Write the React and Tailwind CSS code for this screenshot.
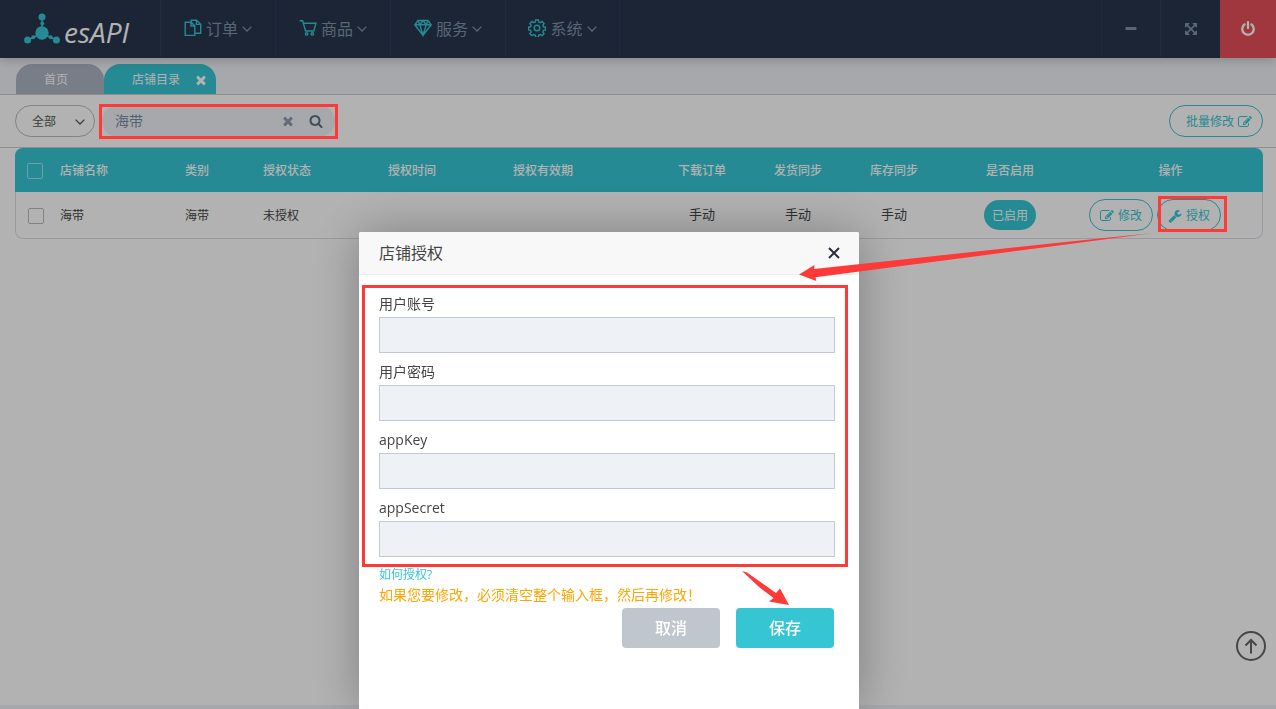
import { useState } from 'react';

const TIMES =
  'M1490 1322q0 40-28 68l-136 136q-28 28-68 28t-68-28l-294-294-294 294q-28 28-68 28t-68-28l-136-136q-28-28-28-68t28-68l294-294-294-294q-28-28-28-68t28-68l136-136q28-28 68-28t68 28l294 294 294-294q28-28 68-28t68 28l136 136q28 28 28 68t-28 68l-294 294 294 294q28 28 28 68z';
const POWER =
  'M1664 896q0 156-61 298t-164 245-245 164-298 61-298-61-245-164-164-245-61-298q0-182 80.5-343t226.5-270q43-32 95.5-25t83.5 50q32 42 24.5 94.5t-49.5 84.5q-98 74-151.5 181t-53.5 228q0 104 40.5 198.5t109.5 163.5 163.5 109.5 198.5 40.5 198.5-40.5 163.5-109.5 109.5-163.5 40.5-198.5q0-121-53.5-228t-151.5-181q-42-32-49.5-84.5t24.5-94.5q31-43 84-50t95 25q146 109 226.5 270t80.5 343zm-640-768v640q0 52-38 90t-90 38-90-38-38-90v-640q0-52 38-90t90-38 90 38 38 90z';
const SEARCH =
  'M1216 832q0-185-131.5-316.5t-316.5-131.5-316.5 131.5-131.5 316.5 131.5 316.5 316.5 131.5 316.5-131.5 131.5-316.5zm512 832q0 52-38 90t-90 38q-54 0-90-38l-343-342q-179 124-399 124-143 0-273.5-55.5t-225-150-150-225-55.5-273.5 55.5-273.5 150-225 225-150 273.5-55.5 273.5 55.5 225 150 150 225 55.5 273.5q0 220-124 399l343 343q37 37 37 90z';
const WRENCH =
  'M448 1472q0-26-19-45t-45-19-45 19-19 45 19 45 45 19 45-19 19-45zm644-420l-682 682q-37 37-90 37-52 0-91-37l-106-108q-38-36-38-90 0-53 38-91l681-681q39 98 114.5 173.5t173.5 114.5zm634-435q0 39-23 106-47 134-164.5 217.5t-258.5 83.5q-185 0-316.5-131.5t-131.5-316.5 131.5-316.5 316.5-131.5q58 0 121.5 16.5t107.5 46.5q16 11 16 28t-16 28l-293 169v224l193 107q5-3 79-48.5t135.5-81 70.5-35.5q15 0 23.5 10t8.5 25z';
const EDIT =
  'M888 1184l116-116-152-152-116 116v56h96v96h56zm440-720q-16-16-33 1l-350 350q-17 17-1 33t33-1l350-350q17-17 1-33zm80 594v190q0 119-84.5 203.5t-203.5 84.5h-832q-119 0-203.5-84.5t-84.5-203.5v-832q0-119 84.5-203.5t203.5-84.5h832q63 0 117 25 15 7 18 23 3 17-9 29l-49 49q-14 14-32 8-23-6-45-6h-832q-66 0-113 47t-47 113v832q0 66 47 113t113 47h832q66 0 113-47t47-113v-126q0-13 9-22l64-64q15-15 35-7t20 29zm-96-738l288 288-672 672h-288v-288zm444 132l-92 92-288-288 92-92q28-28 68-28t68 28l152 152q28 28 28 68t-28 68z';
const MINUS =
  'M1600 736v192q0 40-28 68t-68 28h-1216q-40 0-68-28t-28-68v-192q0-40 28-68t68-28h1216q40 0 68 28t28 68z';
const EXPAND =
  'M1411 541l-355 355 355 355 144-144q29-31 70-14 39 17 39 59v448q0 26-19 45t-45 19h-448q-42 0-59-40-17-39 14-69l144-144-355-355-355 355 144 144q31 30 14 69-17 40-59 40h-448q-26 0-45-19t-19-45v-448q0-42 40-59 39-17 69 14l144 144 355-355-355-355-144 144q-19 19-45 19-12 0-24-5-40-17-40-59v-448q0-26 19-45t45-19h448q42 0 59 40 17 39-14 69l-144 144 355 355 355-355-144-144q-31-30-14-69 17-40 59-40h448q26 0 45 19t19 45v448q0 42-39 59-13 5-25 5-26 0-45-19z';

function Icon({ d, className = 'h-3.5 w-3.5' }) {
  return (
    <svg viewBox="0 0 1792 1792" fill="currentColor" className={className} aria-hidden="true">
      <path d={d} />
    </svg>
  );
}

function Chevron({ className }) {
  return (
    <svg viewBox="0 0 10 6" fill="none" stroke="currentColor" strokeWidth="1.3" className={className} aria-hidden="true">
      <path d="M.6.6 5 5 9.4.6" />
    </svg>
  );
}

function NavIcon({ children }) {
  return (
    <svg
      viewBox="0 0 18 18"
      fill="none"
      stroke="currentColor"
      strokeWidth="1.4"
      className="mb-0.5 h-[18px] w-[18px] text-[#36c6d3]"
      aria-hidden="true"
    >
      {children}
    </svg>
  );
}

const menus = [
  {
    name: '订单',
    icon: (
      <NavIcon>
        <path d="M1.200 3.300h6l3.600 3.600v9.500H1.200zM7 3.500V7h3.600" />
        <path d="M7.200 3.200v-2h5.300l4.200 4v9h-5.800M12.400 1.400v4h4" />
      </NavIcon>
    ),
  },
  {
    name: '商品',
    icon: (
      <NavIcon>
        <path d="M.6 1.700h3l3 10.300h8.200L17 4.300H4.600" />
        <circle cx="7.6" cy="14.900" r="1.2" />
        <circle cx="13.4" cy="14.900" r="1.2" />
      </NavIcon>
    ),
  },
  {
    name: '服务',
    icon: (
      <NavIcon>
        <path d="M4 1.5h10l3.2 4.3L9 16.3.8 5.8zM.8 5.8h16.4M4 1.5l1.8 4.3L9 16.3l3.2-10.5L14 1.5M5.8 5.8 9 1.5l3.2 4.3" />
      </NavIcon>
    ),
  },
  {
    name: '系统',
    icon: (
      <NavIcon>
        <circle cx="9" cy="9" r="2.8" />
        <path d="M7.600 1h2.8l.4 2.1 1.5.6 1.8-1.2 2 2-1.2 1.8.6 1.500 2 .4v2.800l-2 .4-.6 1.5 1.2 1.8-2 2-1.8-1.2-1.5.6-.4 2H7.600l-.4-2-1.5-.6-1.8 1.2-2-2 1.2-1.8-.6-1.5-2-.4V8.200l2-.4.6-1.5-1.2-1.8 2-2 1.8 1.2 1.500-.6z" />
      </NavIcon>
    ),
  },
];

const fields = [
  { id: 'account', label: '用户账号' },
  { id: 'password', label: '用户密码' },
  { id: 'appKey', label: 'appKey' },
  { id: 'appSecret', label: 'appSecret' },
];

const checkbox = 'block h-4 w-4 appearance-none rounded-xs border bg-transparent';
const pill = 'flex h-8 items-center gap-1 rounded-full border border-[#36c6d3] pt-0.5 text-xs text-[#36c6d3]';

function Logo() {
  return (
    <a href="#" className="flex w-[160px] items-center pl-6">
      <svg viewBox="0 0 36 32" fill="#36c6d3" className="h-8 w-9" aria-hidden="true">
        <path d="M18 5v14M4 27l14-7 14 7" fill="none" stroke="#36c6d3" strokeWidth="1.400" />
        <circle cx="18" cy="20" r="6.700" />
        <circle cx="18" cy="4" r="3.500" />
        <circle cx="18.300" cy="10.500" r="1.900" />
        <circle cx="3.600" cy="27" r="3.500" />
        <circle cx="9.300" cy="24.300" r="2" />
        <circle cx="32.400" cy="27" r="3.500" />
        <circle cx="26.700" cy="24.300" r="2" />
      </svg>
      <span className="pt-1.5 pl-1 text-[28px] leading-8 text-white italic">esAPI</span>
    </a>
  );
}

function Header() {
  return (
    <header className="relative z-10 flex h-[58px] bg-[#28354d] text-[#7f92a8] shadow-[0_1px_10px_rgba(50,50,50,0.3)]">
      <Logo />
      <nav className="flex">
        {menus.map((menu) => (
          <a
            key={menu.name}
            href="#"
            className="flex w-[115px] items-center justify-center gap-1 border-l border-[#2d3e56] text-base last:border-r"
          >
            {menu.icon}
            <span>{menu.name}</span>
            <Chevron className="h-1.5 w-2.5" />
          </a>
        ))}
      </nav>
      <div className="ml-auto flex">
        <button aria-label="最小化" className="flex w-[59px] items-center justify-center border-l border-[#2d3e56]">
          <Icon d={MINUS} />
        </button>
        <button aria-label="全屏" className="flex w-[60px] items-center justify-center border-l border-[#2d3e56]">
          <Icon d={EXPAND} />
        </button>
        <button aria-label="退出" className="flex w-14 items-center justify-center bg-[#e7505a] text-white">
          <Icon d={POWER} className="h-4 w-4" />
        </button>
      </div>
    </header>
  );
}

function Toolbar() {
  const [keyword, setKeyword] = useState('海带');

  return (
    <div className="flex h-[53px] items-center justify-between border-b border-[#ccc] pr-[13px] pl-[15px]">
      <div className="flex items-center gap-1">
        <div className="relative">
          <select
            aria-label="类别"
            className="block h-8 w-20 appearance-none rounded-full border border-[#bbb] pt-0.5 pl-4 text-xs text-[#555]"
          >
            <option>全部</option>
          </select>
          <Chevron className="pointer-events-none absolute top-3.5 right-2.5 h-1.5 w-2.5 text-[#555]" />
        </div>
        <div className="relative px-[3px] pt-px pb-0.5 text-[#7c8ca5]">
          <div className="flex h-8 w-[233px] items-center rounded-full bg-[#eef1f5] pr-3 pl-[13px]">
            <input
              aria-label="店铺名称"
              value={keyword}
              onChange={(e) => setKeyword(e.target.value)}
              className="min-w-0 flex-1 bg-transparent text-sm outline-none"
            />
            <button aria-label="清空" onClick={() => setKeyword('')} className="mr-3.5 text-[#8e9bae]">
              <Icon d={TIMES} />
            </button>
            <button aria-label="搜索" className="text-[#5c6f88]">
              <Icon d={SEARCH} />
            </button>
          </div>
          <div className="pointer-events-none absolute inset-0 z-50 border-3 border-[#fd3a38]" />
        </div>
      </div>
      <button className={`${pill} pr-2.5 pl-4`}>
        批量修改
        <Icon d={EDIT} />
      </button>
    </div>
  );
}

function ShopTable() {
  return (
    <div className="mr-[13px] ml-[15px] rounded-lg border border-t-0 border-[#dcdce8]">
      <table className="-mx-px w-[calc(100%+2px)] table-fixed text-left text-xs text-[#444]">
        <colgroup>
          <col className="w-10" />
          <col className="w-[125px]" />
          <col className="w-[78px]" />
          <col className="w-[125px]" />
          <col className="w-[125px]" />
          <col />
          <col className="w-24" />
          <col className="w-24" />
          <col className="w-24" />
          <col className="w-[136px]" />
          <col className="w-[185px]" />
        </colgroup>
        <thead className="text-white">
          <tr className="h-11 [&>th]:bg-[#36c6d3] [&>th]:px-[5px] [&>th]:pt-0.5 [&>th]:font-medium">
            <th className="rounded-tl-lg">
              <input type="checkbox" aria-label="全选" className={`${checkbox} ml-[7px] border-[#9fe4ea]`} />
            </th>
            <th>店铺名称</th>
            <th>类别</th>
            <th>授权状态</th>
            <th>授权时间</th>
            <th>授权有效期</th>
            <th className="text-center">下载订单</th>
            <th className="text-center">发货同步</th>
            <th className="text-center">库存同步</th>
            <th className="text-center">是否启用</th>
            <th className="rounded-tr-lg text-center">操作</th>
          </tr>
        </thead>
        <tbody>
          <tr className="h-[46px] [&>td]:px-[5px]">
            <td className="pt-0.5">
              <input type="checkbox" aria-label="选择海带" className={`${checkbox} ml-2 border-[#bbb]`} />
            </td>
            <td className="pt-0.5">海带</td>
            <td className="pt-0.5">海带</td>
            <td className="pt-0.5">未授权</td>
            <td />
            <td />
            <td className="text-center text-[13px]">手动</td>
            <td className="text-center text-[13px]">手动</td>
            <td className="text-center text-[13px]">手动</td>
            <td>
              <button className="mx-auto block h-[30px] rounded-full bg-[#36c6d3] px-2 pt-0.5 text-xs text-white">
                已启用
              </button>
            </td>
            <td>
              <div className="flex gap-1 pl-1.5">
                <button className={`${pill} px-2.5`}>
                  <Icon d={EDIT} />
                  修改
                </button>
                <div className="relative">
                  <button className={`${pill} px-2.5`}>
                    <Icon d={WRENCH} />
                    授权
                  </button>
                  <div className="pointer-events-none absolute -top-[3px] -right-1.5 -bottom-px left-px z-50 border-3 border-[#fd3a38]" />
                </div>
              </div>
            </td>
          </tr>
        </tbody>
      </table>
    </div>
  );
}

function AuthDialog() {
  return (
    <div className="fixed inset-0 z-40 flex justify-center bg-black/30 pt-[232px] pr-[58px]">
      <div
        role="dialog"
        aria-labelledby="auth-title"
        className="relative w-[500px] rounded-t-xs bg-white text-[#444] shadow-[1px_1px_50px_rgba(0,0,0,0.3)]"
      >
        <div className="flex h-[43px] items-center justify-between rounded-t-xs border-b border-[#eee] bg-[#f8f8f8] pr-[19px] pl-5">
          <h2 id="auth-title" className="text-base">
            店铺授权
          </h2>
          <button aria-label="关闭">
            <svg viewBox="0 0 12 12" stroke="#2d2c3b" strokeWidth="2" className="h-3 w-3" aria-hidden="true">
              <path d="m1 1 10 10M11 1 1 11" />
            </svg>
          </button>
        </div>
        <form onSubmit={(e) => e.preventDefault()}>
          <div className="mt-2.5 mr-[11px] ml-[3px] flex flex-col gap-[9px] border-3 border-[#fd3a38] pt-1.5 pr-2.5 pb-[7px] pl-3.5">
            {fields.map((field) => (
              <div key={field.id} className="flex flex-col gap-[3px]">
                <label htmlFor={field.id} className="text-sm leading-5">
                  {field.label}
                </label>
                <input id={field.id} className="h-9 w-full border border-[#c2cad8] bg-[#eef1f5] px-2 text-sm" />
              </div>
            ))}
          </div>
          <div className="pr-[25px] pl-5">
            <a href="#" className="block text-xs leading-4 text-[#36c6d3]">
              如何授权?
            </a>
            <p className="text-sm leading-6 text-[#ffa500]">如果您要修改，必须清空整个输入框，然后再修改！</p>
            <div className="mt-px flex justify-end gap-4 text-base font-medium text-white">
              <button type="button" className="h-10 w-[98px] rounded-sm bg-[#bfc6ce]">
                取消
              </button>
              <button type="submit" className="h-10 w-[98px] rounded-sm bg-[#36c6d3]">
                保存
              </button>
            </div>
          </div>
        </form>

        {/* pointers from the row action to the dialog, and to the save button */}
        <svg
          viewBox="0 0 356 50"
          fill="#fd3a38"
          className="pointer-events-none absolute top-0 left-[440px] h-[50px] w-[356px]"
          aria-hidden="true"
        >
          <path d="M0 42.600 15.500 33l-.3 4L252 11.500 354 1 252 14.500 16.500 45.300l.8 3.700z" />
        </svg>
        <svg
          viewBox="0 0 50 36"
          fill="#fd3a38"
          className="pointer-events-none absolute top-[338px] left-[382px] h-9 w-[50px]"
          aria-hidden="true"
        >
          <path d="M1 1 6 2.500 35 23l4-4.500L48 35l-20-3.500 4.500-3.500L18 17z" />
        </svg>
      </div>
    </div>
  );
}

export default function App() {
  return (
    <div className="flex min-h-screen flex-col bg-white font-['Open_Sans','Noto_Sans_CJK_SC',sans-serif]">
      <Header />
      <div className="flex h-[37px] items-end border-b border-[#ccc] bg-[#eef1f5] px-4 text-xs text-white">
        <a href="#" className="flex h-[30px] w-[88px] items-center rounded-t-2xl bg-[#adb5c3] pt-0.5 pl-7">
          首页
        </a>
        <div className="flex h-[30px] w-28 items-center justify-between rounded-t-2xl bg-[#36c6d3] pt-0.5 pr-2 pl-7">
          <a href="#">店铺目录</a>
          <button aria-label="关闭标签">
            <Icon d={TIMES} />
          </button>
        </div>
      </div>
      <main className="flex-1">
        <Toolbar />
        <ShopTable />
      </main>
      <footer className="h-1 bg-[#eef1f5]" />

      <button
        aria-label="回到顶部"
        className="fixed right-2.5 bottom-12 flex h-[30px] w-[30px] items-center justify-center rounded-full border-2 border-[#666] text-[#666]"
      >
        <svg viewBox="0 0 14 16" fill="none" stroke="currentColor" strokeWidth="2" className="h-4 w-3.5" aria-hidden="true">
          <path d="M7 15.500V2M1.500 7.500 7 2l5.500 5.500" />
        </svg>
      </button>

      <AuthDialog />
    </div>
  );
}
